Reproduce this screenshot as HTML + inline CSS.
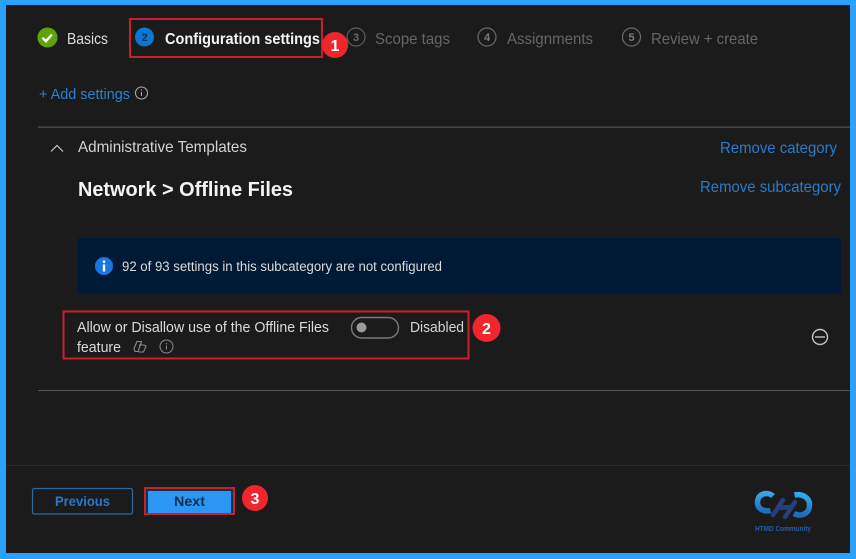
<!DOCTYPE html>
<html lang="en">
<head>
<meta charset="utf-8">
<title>Configuration settings</title>
<style>
html,body{margin:0;padding:0;background:#2ba0ff;width:856px;height:559px;overflow:hidden}
svg{display:block;filter:blur(.3px)}
text{font-family:"Liberation Sans",sans-serif}
</style>
</head>
<body>
<svg width="856" height="559" viewBox="0 0 856 559" xmlns="http://www.w3.org/2000/svg">
<defs>
<linearGradient id="lg" x1="0" y1="0" x2="0" y2="1"><stop offset="0" stop-color="#35a8ea"/><stop offset="1" stop-color="#1c6fc0"/></linearGradient>
</defs>
<rect width="856" height="559" fill="#2ba0ff"/>
<rect x="6" y="5" width="844" height="548" fill="#1b1b1b"/>

<!-- Stepper -->
<circle cx="47.500" cy="37.500" r="10" fill="#5ea30e"/>
<path d="M42.500 37.800l3.400 3.400 6-6.600" fill="none" stroke="#fff" stroke-width="2.400"/>
<text x="67" y="44" font-size="16" fill="#dcdcdc" textLength="41" lengthAdjust="spacingAndGlyphs">Basics</text>

<rect x="130" y="19" width="192" height="38" fill="none" stroke="#c8202c" stroke-width="2"/>
<circle cx="144.500" cy="37" r="9.500" fill="#0a78d4"/>
<text x="144.500" y="41" font-size="11" font-weight="bold" fill="#0c3158" text-anchor="middle">2</text>
<text x="165" y="44" font-size="16" font-weight="bold" fill="#f4f4f4" textLength="155" lengthAdjust="spacingAndGlyphs">Configuration settings</text>

<circle cx="356" cy="37" r="9" fill="none" stroke="#5f5f5f" stroke-width="1.200"/>
<text x="356" y="41" font-size="11" font-weight="bold" fill="#6a6a6a" text-anchor="middle">3</text>
<text x="375" y="44" font-size="16" fill="#666" textLength="75" lengthAdjust="spacingAndGlyphs">Scope tags</text>

<circle cx="487" cy="37" r="9" fill="none" stroke="#6a6a6a" stroke-width="1.200"/>
<text x="487" y="41" font-size="11" font-weight="bold" fill="#7a7a7a" text-anchor="middle">4</text>
<text x="507" y="44" font-size="16" fill="#666" textLength="86" lengthAdjust="spacingAndGlyphs">Assignments</text>

<circle cx="631.500" cy="37" r="9" fill="none" stroke="#6a6a6a" stroke-width="1.200"/>
<text x="631.500" y="41" font-size="11" font-weight="bold" fill="#7a7a7a" text-anchor="middle">5</text>
<text x="651" y="44" font-size="16" fill="#666" textLength="107" lengthAdjust="spacingAndGlyphs">Review + create</text>

<circle cx="335" cy="45" r="13" fill="#f0262c"/>
<text x="335" y="51" font-size="16" font-weight="bold" fill="#fff" text-anchor="middle">1</text>

<!-- Add settings -->
<text x="39" y="99" font-size="15" fill="#2f7fd0" textLength="91" lengthAdjust="spacingAndGlyphs">+ Add settings</text>
<circle cx="141.500" cy="93" r="6" fill="none" stroke="#b0b0b0" stroke-width="1"/>
<path d="M141.500 92v4M141.500 89.500v1.200" stroke="#b0b0b0" stroke-width="1"/>

<rect x="38" y="126.500" width="812" height="1.300" fill="#505050"/>

<!-- Category -->
<path d="M51 151.500l6-6 6 6" fill="none" stroke="#c8c8c8" stroke-width="1.200"/>
<text x="78" y="152" font-size="16" fill="#d2d2d2" textLength="169" lengthAdjust="spacingAndGlyphs">Administrative Templates</text>
<text x="720" y="153" font-size="16" fill="#2b7cc9" textLength="117" lengthAdjust="spacingAndGlyphs">Remove category</text>
<text x="700" y="192" font-size="16" fill="#2b7cc9" textLength="141" lengthAdjust="spacingAndGlyphs">Remove subcategory</text>
<text x="78" y="196" font-size="20" font-weight="bold" fill="#f4f4f4" textLength="215" lengthAdjust="spacingAndGlyphs">Network &gt; Offline Files</text>

<!-- Banner -->
<rect x="78" y="238" width="763" height="55" fill="#001a36"/>
<circle cx="104" cy="266" r="9" fill="#1a75e0"/>
<rect x="102.800" y="264.500" width="2.400" height="7" fill="#fff"/>
<rect x="102.800" y="260.500" width="2.400" height="2.400" fill="#fff"/>
<text x="122" y="271" font-size="13.500" fill="#dadada" textLength="320" lengthAdjust="spacingAndGlyphs">92 of 93 settings in this subcategory are not configured</text>

<!-- Setting row -->
<rect x="63.500" y="311.500" width="405" height="47" fill="none" stroke="#c8202c" stroke-width="2"/>
<text x="77" y="332" font-size="14.500" fill="#dadada" textLength="252" lengthAdjust="spacingAndGlyphs">Allow or Disallow use of the Offline Files</text>
<text x="77" y="352" font-size="14.500" fill="#dadada" textLength="44" lengthAdjust="spacingAndGlyphs">feature</text>
<g fill="none" stroke="#8a8a8a" stroke-width="1.100">
<path d="M134 348.500l3-7h4.500l-3.500 10h-3z"/>
<path d="M139 345h5l2 1-2.500 6h-5"/>
</g>
<circle cx="166.500" cy="346.500" r="6.500" fill="none" stroke="#8a8a8a" stroke-width="1"/>
<path d="M166.500 345.500v4M166.500 343v1.200" stroke="#8a8a8a" stroke-width="1"/>
<rect x="351.500" y="317.500" width="47" height="20.500" rx="10.250" fill="none" stroke="#7a7a7a" stroke-width="1.400"/>
<circle cx="361.500" cy="327.500" r="5" fill="#9a9a9a"/>
<text x="410" y="332" font-size="14.500" fill="#d4d4d4" textLength="54" lengthAdjust="spacingAndGlyphs">Disabled</text>
<circle cx="486.500" cy="328" r="14" fill="#f0262c"/>
<text x="486.500" y="334" font-size="16" font-weight="bold" fill="#fff" text-anchor="middle">2</text>

<circle cx="820" cy="337" r="7.500" fill="none" stroke="#c4c4c4" stroke-width="1.400"/>
<path d="M815 337h10" stroke="#c4c4c4" stroke-width="1.400"/>

<rect x="38" y="390" width="812" height="1" fill="#555"/>
<rect x="6" y="465" width="844" height="1" fill="#2a2a2a"/>

<!-- Footer -->
<rect x="32.500" y="488.500" width="100" height="25.500" rx="2" fill="none" stroke="#2a6a9e" stroke-width="1.200"/>
<text x="82.500" y="506" font-size="14" font-weight="bold" fill="#2a78c8" text-anchor="middle" textLength="55" lengthAdjust="spacingAndGlyphs">Previous</text>
<rect x="145" y="488" width="89" height="26" fill="#10324f" stroke="#c8202c" stroke-width="2"/>
<rect x="148" y="491" width="83" height="22" fill="#2b97f2"/>
<text x="189.500" y="506" font-size="14" font-weight="bold" fill="#12304f" text-anchor="middle" textLength="31" lengthAdjust="spacingAndGlyphs">Next</text>
<circle cx="255" cy="498" r="13" fill="#f0262c"/>
<text x="255" y="504" font-size="16" font-weight="bold" fill="#fff" text-anchor="middle">3</text>

<!-- Logo -->
<g fill="none">
<path d="M773 496c-5-4.500-15.500-3-15.500 6.500 0 7.500 8 9.500 13 8" stroke="url(#lg)" stroke-width="5.500"/>
<path d="M794 513.500c6 3.500 15.500 1 15.500-8.500 0-8-8-11.500-15-10" stroke="url(#lg)" stroke-width="5.500"/>
<path d="M773 515l10-15M785 517l10-15M779 508l10-1" stroke="#26407e" stroke-width="4.500" stroke-linecap="round"/>
</g>
<text x="755" y="531" font-size="7.500" font-weight="bold" fill="#2a5c9c" textLength="56" lengthAdjust="spacingAndGlyphs">HTMD Community</text>
</svg>
</body>
</html>
